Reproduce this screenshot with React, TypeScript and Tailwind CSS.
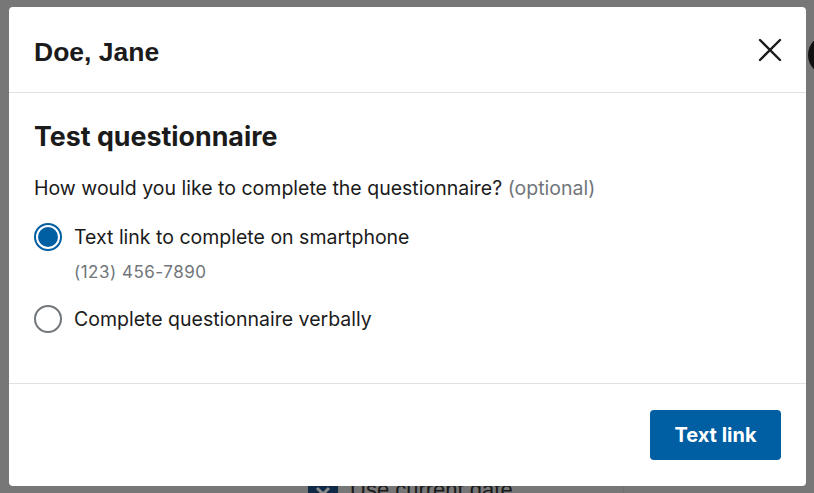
import React from "react";

export default function App() {
  return (
    <div className="relative w-[814px] h-[493px] overflow-hidden bg-[#777777]" style={{ fontFamily: "Inter, 'Noto Sans', sans-serif" }}>
      {/* background page remnants under the overlay */}
      <div className="absolute left-[808px] top-[35px] w-[40px] h-[40px] rounded-full bg-[#111111]" />
      <div className="absolute left-[623px] top-[470px] w-[1px] h-[30px] bg-[#6f6f6f]" />
      <div className="absolute left-[308px] top-[480px] flex items-start gap-[12px]">
        <div className="w-[30px] h-[30px] bg-[#0e2a47] flex items-start justify-center">
          <svg width="16" height="12" viewBox="0 0 16 12" className="mt-[6px]">
            <path d="M2 2 L8 8 L14 2" stroke="#8a8a8a" strokeWidth="3" fill="none" />
          </svg>
        </div>
        <span className="text-[22px] leading-[24px] text-[#1a1a1a] mt-[-2px]" style={{ fontFamily: "'Liberation Sans', sans-serif" }}>Use current date</span>
      </div>

      {/* modal */}
      <div className="absolute left-[9px] top-[7px] w-[797px] h-[479px] bg-white rounded-[4px] flex flex-col">
        <div className="h-[86px] flex items-center justify-between pl-[25px] pr-[22px] border-b border-[#dfe1e2]">
          <h1 className="text-[26.5px] leading-[32px] mt-[4px] font-bold text-[#1b1b1b]" style={{ fontFamily: "'Liberation Sans', Arial, sans-serif" }}>Doe, Jane</h1>
          <svg width="28" height="28" viewBox="0 0 28 28">
            <path d="M4 4 L24 24 M24 4 L4 24" stroke="#1b1b1b" strokeWidth="2.4" strokeLinecap="round" />
          </svg>
        </div>
        <div className="flex-1 pl-[25px] pt-[27px] text-[#1b1b1b]">
          <h2 className="text-[26.8px] leading-[32px] font-bold">Test questionnaire</h2>
          <p className="mt-[22px] text-[19.5px] leading-[28px]">
            How would you like to complete the questionnaire? <span className="text-[#71767a]">(optional)</span>
          </p>
          <div className="mt-[21px] flex items-center gap-[12px]">
            <div className="w-[28px] h-[28px] rounded-full border-[2px] border-[#005ea2] bg-white flex items-center justify-center">
              <div className="w-[20px] h-[20px] rounded-full bg-[#005ea2]" />
            </div>
            <span className="text-[19.5px] leading-[28px]">Text link to complete on smartphone</span>
          </div>
          <div className="ml-[40px] mt-[9px] text-[17px] leading-[24px] tracking-[0.5px] text-[#71767a]">(123) 456-7890</div>
          <div className="mt-[21px] flex items-center gap-[12px]">
            <div className="w-[28px] h-[28px] rounded-full border-[2px] border-[#71767a] bg-white" />
            <span className="text-[19.5px] leading-[28px]">Complete questionnaire verbally</span>
          </div>
        </div>
        <div className="h-[103px] border-t border-[#dfe1e2] flex items-center justify-end pr-[25px]">
          <button className="w-[131px] h-[50px] rounded-[4px] bg-[#005ea2] text-white text-[20px] font-bold">Text link</button>
        </div>
      </div>
    </div>
  );
}
